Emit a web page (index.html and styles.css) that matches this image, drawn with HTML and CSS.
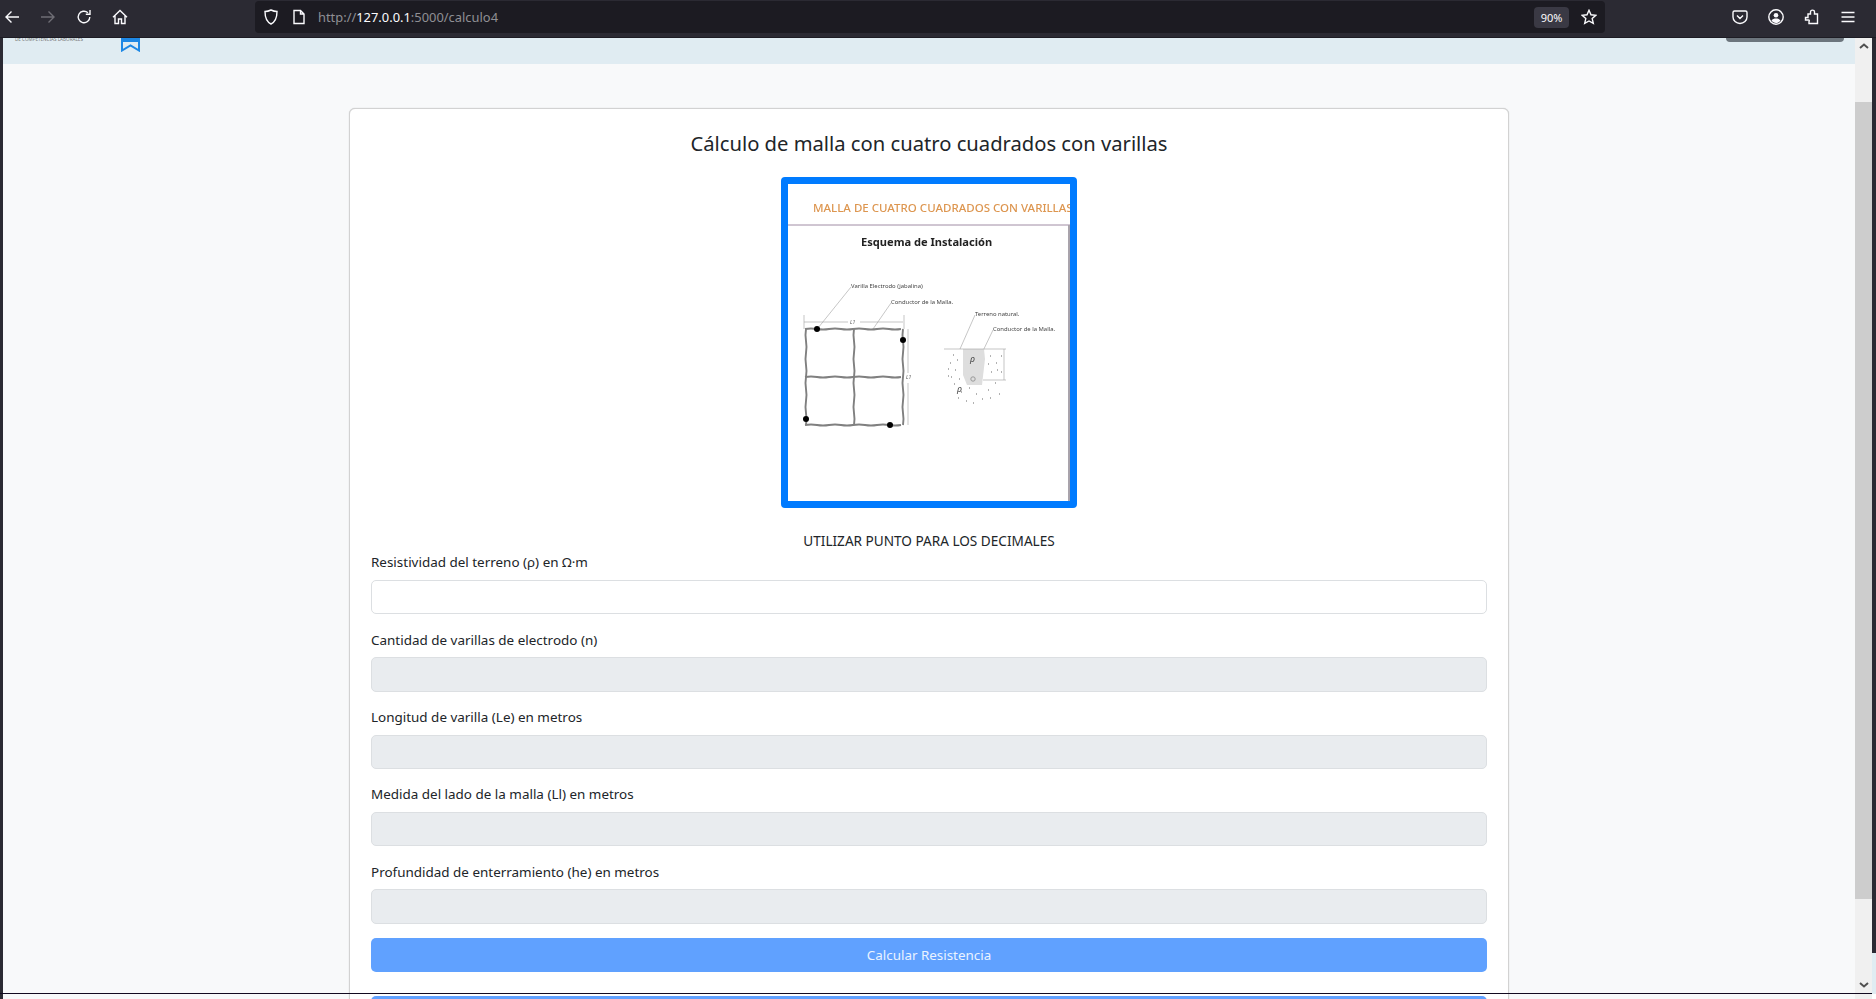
FILE: index.html
```html
<!DOCTYPE html>
<html lang="es">
<head>
    <meta charset="UTF-8">
    <meta name="viewport" content="width=device-width, initial-scale=1.0">
    <title>Cálculo de malla</title>
    <link rel="stylesheet" href="styles.css">
</head>
<body>

    <div class="toolbar">
        <div class="nav-icons">
            <svg class="icon" viewBox="0 0 16 16"><path d="M15 8H2M7.5 2.5 2 8l5.500 5.500"/></svg>
            <svg class="icon dim" viewBox="0 0 16 16"><path d="M1 8h13M8.500 2.500 14 8l-5.500 5.500"/></svg>
            <svg class="icon" viewBox="0 0 16 16"><path d="M13.800 8a5.800 5.800 0 1 1-1.900-4.300M14 1v4.200H9.800"/></svg>
            <svg class="icon" viewBox="0 0 16 16"><path d="M1 8.200 8 1.500l7 6.700M3 6.500V14.500h3.500V10h3v4.500H13V6.500"/></svg>
        </div>
        <div class="urlbar">
            <svg class="icon small" viewBox="0 0 16 16"><path d="M8 1c2 1 4 1.500 6 1.500C14 9 12 13 8 15 4 13 2 9 2 2.500 4 2.500 6 2 8 1z"/></svg>
            <svg class="icon small doc" viewBox="0 0 16 16"><path d="M3 1.500h6.500L13 5v9.500H3zM9.500 1.500V5H13"/></svg>
            <span class="url">http://<b>127.0.0.1</b>:5000/calculo4</span>
            <span class="zoom-chip">90%</span>
            <svg class="icon star" viewBox="0 0 16 16"><path d="m8 1.300 2 4.500 4.900.5-3.700 3.300 1.100 4.800L8 12l-4.300 2.400 1.100-4.800L1.100 6.300 6 5.800z"/></svg>
        </div>
        <div class="right-icons">
            <svg class="icon" viewBox="0 0 16 16"><path d="M2.500 2h11A1.500 1.500 0 0 1 15 3.500V8A7 6.500 0 0 1 1 8V3.500A1.500 1.500 0 0 1 2.500 2zM5 6.500l3 3 3-3"/></svg>
            <svg class="icon" viewBox="0 0 16 16"><circle cx="8" cy="8" r="7.200"/><circle class="solid" cx="8" cy="6.200" r="2.300"/><path class="solid" d="M3.500 11.500c1-1.500 2.700-2 4.500-2s3.500.5 4.500 2c-1 1.500-2.700 2.400-4.500 2.400s-3.500-.9-4.500-2.400z"/></svg>
            <svg class="icon" viewBox="0 0 16 16"><path d="M1.500 11h3c1 0 1 1 .5 1.500v2h8.500V5h-3V3c0-2.500-4-2.500-4 0v2H4v3.500H1.500z"/></svg>
            <svg class="icon" viewBox="0 0 16 16"><path d="M1.500 3.500h13M1.500 8h13M1.500 12.500h13"/></svg>
        </div>
    </div>

    <div class="viewport">
        <div class="page">
            <div class="topbar">
                <div class="logo-text">DE COMPETENCIAS LABORALES</div>
                <svg class="bookmark" viewBox="0 0 19 14"><path d="M0 0h19v4H0z" fill="#1e88e5"/><path d="M1 0v12.500l8.500-5 8.500 5V0" fill="none" stroke="#1e88e5" stroke-width="2"/></svg>
                <div class="top-button"></div>
            </div>

            <div class="card">
                <h1>Cálculo de malla con cuatro cuadrados con varillas</h1>

                <svg class="scheme" viewBox="788 184 282 317">
                    <defs><filter id="soft"><feGaussianBlur stdDeviation="0.45"/></filter></defs>
                    <rect x="788" y="184" width="282" height="317" fill="#fff"/>
                    <g filter="url(#soft)">
                        <text class="scheme-title" x="813" y="212">MALLA DE CUATRO CUADRADOS CON VARILLAS</text>
                        <path d="M788 225h282" stroke="#a08ca4" stroke-width="1"/>
                        <path d="M1069 225v276" stroke="#a9a3ab" stroke-width="2"/>
                        <text class="scheme-sub" x="861" y="246">Esquema de Instalación</text>

                        <text class="scheme-note" x="851" y="288">Varilla Electrodo (jabalina)</text>
                        <text class="scheme-note" x="891" y="304">Conductor de la Malla.</text>
                        <text class="scheme-note" x="975" y="316">Terreno natural.</text>
                        <text class="scheme-note" x="993" y="331">Conductor de la Malla.</text>
                        <path class="leader" d="M851 287 818 328M891 303l-18 26M975 315l-15 34M993 330l-23 48"/>

                        <path class="mesh" d="M805 329q6-1 12 0t12 0 12 0 12 0 12 0 12 0 12 0 12 0M805 377q6-1 12 0t12 0 12 0 12 0 12 0 12 0 12 0 12 0M805 425q6-1 12 0t12 0 12 0 12 0 12 0 12 0 12 0 12 0"/>
                        <path class="mesh" d="M806 329q-1 6 0 12t0 12 0 12 0 12 0 12 0 12 0 12 0 12M854 329q-1 6 0 12t0 12 0 12 0 12 0 12 0 12 0 12 0 12M903 329q-1 6 0 12t0 12 0 12 0 12 0 12 0 12 0 12 0 12"/>
                        <circle cx="817" cy="329" r="3"/>
                        <circle cx="903" cy="340" r="3"/>
                        <circle cx="806" cy="419" r="3"/>
                        <circle cx="890" cy="425" r="3"/>
                        <path class="leader" d="M804 322h44M860 322h43M804 315v14M904 315v14M908 329v44M908 383v42"/>
                        <text class="scheme-dim" x="850" y="324">L1</text>
                        <text class="scheme-dim" x="906" y="379">L1</text>

                        <path d="M963 349h21l1 10-3 26h-15l-4-10z" fill="#dedede"/>
                        <path class="leader" d="M944 349h62M1004 349v31M983 380h23"/>
                        <path class="soil" d="M953 355h1M950 363h1M957 360h1M948 369h1M955 370h1M951 377h1M948 376h1M959 379h1M954 384h1M961 392h1M969 388h1M976 394h1M988 390h1M995 383h1M999 394h1M990 356h1M996 363h1M1001 356h1M1001 372h1M991 372h1M958 398h1M966 401h1M982 399h1M973 403h1M990 398h1M997 370h1M988 364h1"/>
                        <circle class="pin" cx="973" cy="379" r="2.200"/>
                        <text class="scheme-rho" x="970" y="362">ρ</text>
                        <text class="scheme-rho" x="957" y="392">ρ</text>
                    </g>
                </svg>

                <p class="hint">UTILIZAR PUNTO PARA LOS DECIMALES</p>

                <form id="mallaForm">
                    <div class="form-group">
                        <label for="rho">Resistividad del terreno (ρ) en Ω·m</label>
                        <input type="text" id="rho" name="rho">
                    </div>
                    <div class="form-group">
                        <label for="n">Cantidad de varillas de electrodo (n)</label>
                        <input type="text" id="n" name="n" disabled>
                    </div>
                    <div class="form-group">
                        <label for="le">Longitud de varilla (Le) en metros</label>
                        <input type="text" id="le" name="le" disabled>
                    </div>
                    <div class="form-group">
                        <label for="ll">Medida del lado de la malla (Ll) en metros</label>
                        <input type="text" id="ll" name="ll" disabled>
                    </div>
                    <div class="form-group">
                        <label for="he">Profundidad de enterramiento (he) en metros</label>
                        <input type="text" id="he" name="he" disabled>
                    </div>
                    <button type="button" class="btn">Calcular Resistencia</button>
                    <button type="button" class="btn"></button>
                </form>
            </div>
        </div>

        <div class="scrollbar">
            <svg class="arrow" viewBox="0 0 10 6"><path d="M1 5l4-3.500L9 5"/></svg>
            <div class="thumb"></div>
            <svg class="arrow arrow-down" viewBox="0 0 10 6"><path d="M1 1l4 3.500L9 1"/></svg>
        </div>

        <div class="edge">
            <div class="edge-dark"></div>
            <div class="edge-light"></div>
            <div class="edge-white"></div>
        </div>
    </div>

    <div class="window-line"></div>

</body>
</html>
```

FILE: styles.css
```css
html, body {
    margin: 0;
    height: 100%;
    overflow: hidden;
}
body {
    position: relative;
    background-color: #2b2a33;
    font-family: "Noto Sans", Arial, sans-serif;
    color: #212529;
}

/* browser chrome */
.toolbar {
    display: flex;
    align-items: center;
    height: 37px;
    border-bottom: 1px solid #1d1c24;
}
.icon {
    width: 16px;
    height: 16px;
    flex: none;
    fill: none;
    stroke: #fbfbfe;
    stroke-width: 1.400;
}
.icon .solid {
    fill: #fbfbfe;
    stroke: none;
}
.icon.dim {
    stroke: #6f6e76;
}
.nav-icons {
    display: flex;
    align-items: center;
    gap: 20px;
    width: 255px;
    margin-bottom: 3px;
    padding-left: 4px;
    box-sizing: border-box;
}
.urlbar {
    display: flex;
    align-items: center;
    width: 1350px;
    height: 32px;
    margin-bottom: 3px;
    padding-left: 8px;
    box-sizing: border-box;
    background-color: #1c1b22;
    border-radius: 4px;
}
.icon.small {
    margin-left: 0;
}
.icon.doc {
    margin-left: 12px;
}
.url {
    margin-left: 11px;
    font-size: 12.900px;
    color: #8f8f94;
}
.url b {
    font-weight: 400;
    color: #fbfbfe;
}
.zoom-chip {
    margin-left: auto;
    width: 35px;
    height: 21px;
    line-height: 21px;
    text-align: center;
    font-size: 11px;
    color: #fbfbfe;
    background-color: #3a3944;
    border-radius: 4px;
}
.icon.star {
    margin: 0 8px 0 12px;
}
.right-icons {
    display: flex;
    align-items: center;
    gap: 20px;
    margin-left: 127px;
    margin-bottom: 3px;
}

/* page area */
.viewport {
    display: flex;
    height: 961px;
    padding-left: 3px;
}
.page {
    flex: 1;
    min-width: 0;
    overflow: hidden;
    background-color: #f8f9fa;
}
.topbar {
    display: flex;
    align-items: flex-start;
    height: 26px;
    background-color: #e0ecf2;
}
.logo-text {
    width: 118px;
    height: 3px;
    padding-left: 12px;
    box-sizing: border-box;
    overflow: hidden;
    font-size: 4.600px;
    line-height: 3px;
    white-space: nowrap;
    color: #777;
}
.bookmark {
    width: 19px;
    height: 14px;
}
.top-button {
    width: 118px;
    height: 4px;
    margin-left: auto;
    margin-right: 11px;
    background-color: #6c757d;
    border-radius: 0 0 4px 4px;
}
.card {
    width: 1160px;
    margin: 44px auto 0;
    padding: 21px;
    box-sizing: border-box;
    background-color: white;
    border: 1px solid #d2d2d2;
    border-radius: 6px;
    box-shadow: 0 0 1px rgba(0, 0, 0, 0.25);
}
h1 {
    margin: 0 0 21px;
    text-align: center;
    font-size: 20.200px;
    font-weight: 400;
    line-height: 26px;
}
.scheme {
    display: block;
    width: 282px;
    height: 317px;
    margin: 0 auto;
    border: 7px solid #007bff;
    border-radius: 4px;
}
.scheme-title {
    font-size: 11.500px;
    font-weight: 500;
    fill: #dd9650;
}
.scheme-sub {
    font-size: 11.100px;
    font-weight: 700;
    fill: #222;
}
.scheme-note {
    font-size: 5.900px;
    fill: #444;
}
.scheme-dim {
    font-size: 5px;
    font-style: italic;
    fill: #555;
}
.scheme-rho {
    font-size: 9px;
    font-style: italic;
    fill: #444;
}
.leader {
    fill: none;
    stroke: #a0a0a0;
    stroke-width: 0.600;
}
.mesh {
    fill: none;
    stroke: #808080;
    stroke-width: 1.900;
}
.soil {
    fill: none;
    stroke: #666;
    stroke-width: 1.200;
}
.pin {
    fill: none;
    stroke: #999;
}
.hint {
    margin: 21.600px 0 0;
    text-align: center;
    font-size: 13.600px;
    line-height: 21.600px;
}
.form-group {
    margin-bottom: 14.400px;
}
label {
    display: block;
    margin-bottom: 6.200px;
    padding-top: 1px;
    font-size: 13.450px;
    line-height: 21.600px;
}
input {
    display: block;
    width: 100%;
    height: 34.200px;
    box-sizing: border-box;
    background-color: white;
    border: 1px solid #dcdfe2;
    border-radius: 5px;
}
input:disabled {
    background-color: #e9ecef;
}
.btn {
    display: block;
    width: 100%;
    height: 34px;
    margin-bottom: 24px;
    background-color: #60a1ff;
    color: #eaf3ff;
    border: none;
    border-radius: 5px;
    font-family: inherit;
    font-size: 13.400px;
}

/* scrollbar and window edges */
.scrollbar {
    display: flex;
    flex-direction: column;
    align-items: center;
    width: 17px;
    background-color: #f0f0f0;
}
.arrow {
    width: 10px;
    height: 6px;
    margin-top: 5px;
    fill: none;
    stroke: #505050;
    stroke-width: 2;
}
.thumb {
    width: 100%;
    height: 797px;
    margin-top: 53px;
    background-color: #cdcdcd;
}
.arrow-down {
    margin-top: 83px;
}
.edge {
    display: flex;
    flex-direction: column;
    width: 4px;
}
.edge-dark {
    flex: 1;
}
.edge-light {
    height: 41px;
    background-color: #e0ecf2;
}
.edge-white {
    height: 5px;
    background-color: white;
}
.window-line {
    position: absolute;
    left: 0;
    top: 993px;
    width: 1872px;
    height: 1px;
    background-color: #120a20;
}
```
